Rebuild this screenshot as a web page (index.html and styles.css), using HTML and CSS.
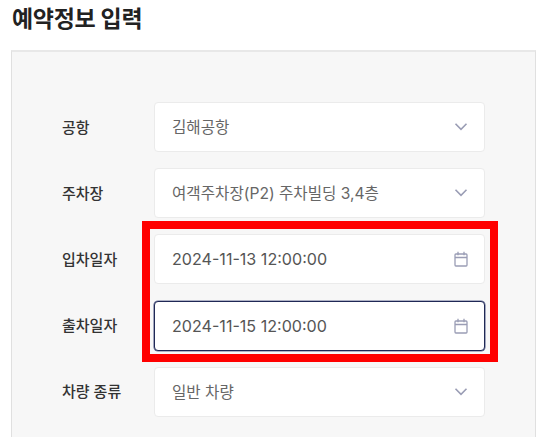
FILE: index.html
```html
<!DOCTYPE html>
<html lang="ko">

<head>
	<meta charset="utf-8">
	<title>예약정보 입력</title>
	<link rel="stylesheet" href="styles.css">
</head>

<body>
	<svg class="iconDefs" width="0" height="0">
		<symbol id="chevron" viewBox="0 0 14 14">
			<path d="M1.500 3.700 7 9.300l5.500-5.600" fill="none" stroke="currentColor" stroke-width="1.600" />
		</symbol>
		<symbol id="calendar" viewBox="0 0 14 16">
			<path d="M1.900 3h10.200c.5 0 .9.4.9.9v10.200c0 .5-.4.9-.9.9H1.900c-.5 0-.9-.4-.9-.9V3.900c0-.5.4-.9.9-.9zM1 6.500h12M4 .8v3.400M10 .8v3.400" fill="none" stroke="currentColor" stroke-width="1.300" />
		</symbol>
	</svg>

	<h2 class="title">예약정보 입력</h2>

	<div class="panel">
		<div class="formRow">
			<label class="label">공항</label>
			<div class="field">
				<span class="value">김해공항</span>
				<svg class="chevron"><use href="#chevron" /></svg>
			</div>
		</div>
		<div class="formRow">
			<label class="label">주차장</label>
			<div class="field">
				<span class="value">여객주차장(P2) 주차빌딩 3,4층</span>
				<svg class="chevron"><use href="#chevron" /></svg>
			</div>
		</div>
		<div class="formRow">
			<label class="label">입차일자</label>
			<div class="field">
				<span class="value date">2024-11-13 12:00:00</span>
				<svg class="calendar"><use href="#calendar" /></svg>
			</div>
		</div>
		<div class="formRow">
			<label class="label">출차일자</label>
			<div class="field focused">
				<span class="value date">2024-11-15 12:00:00</span>
				<svg class="calendar"><use href="#calendar" /></svg>
			</div>
		</div>
		<div class="formRow">
			<label class="label">차량 종류</label>
			<div class="field">
				<span class="value">일반 차량</span>
				<svg class="chevron"><use href="#chevron" /></svg>
			</div>
		</div>
	</div>

	<div class="highlight"></div>
</body>

</html>
```

FILE: styles.css
```css
html,
body {
	height: 100%;
	margin: 0;
	overflow: hidden;
}

body {
	position: relative;
	background-color: white;
	font-family: Inter, "Noto Sans CJK KR", sans-serif;
	color: #222;
}

.iconDefs {
	position: absolute;
}

.title {
	height: 50px;
	margin: 0;
	padding: 3px 0 0 12px;
	box-sizing: border-box;

	font-size: 23px;
	font-weight: 700;
	line-height: 32px;
	letter-spacing: -0.3px;
}

.panel {
	display: flex;
	flex-direction: column;
	gap: 16.200px;

	width: 525px;
	height: 387px;
	margin-left: 11px;
	padding: 50px 0 0 50px;
	box-sizing: border-box;

	border-left: solid 1px #e0e0e0;
	border-right: solid 1px #e0e0e0;
	border-top: solid 2px #e8e8e8;
	background-color: #f7f7f7;
}

.formRow {
	display: flex;
	align-items: center;
}

.label {
	width: 92px;
	padding-bottom: 2px;

	font-size: 15px;
	font-weight: 500;
	color: #333;
}

.field {
	display: flex;
	align-items: center;
	justify-content: space-between;

	width: 331px;
	height: 50px;
	padding: 0 16px 0 17px;
	box-sizing: border-box;

	border: solid 1px #ebebeb;
	border-radius: 4px;
	background-color: white;
}

.focused {
	border-color: #1f2855;
	box-shadow: 0 0 0 0.6px #6a7196;
}

.value {
	padding-bottom: 2px;

	font-size: 15.600px;
	color: #666;
}

.date {
	padding-bottom: 0;

	font-size: 16.100px;
	color: #555;
}

.chevron {
	width: 14px;
	height: 14px;
	color: #9a9db5;
}

.calendar {
	width: 14px;
	height: 16px;
	color: #9a9db5;
}

.highlight {
	position: absolute;
	left: 142px;
	top: 221px;
	width: 356px;
	height: 141px;
	box-sizing: border-box;

	border: solid 8px #ff0000;
}
```
